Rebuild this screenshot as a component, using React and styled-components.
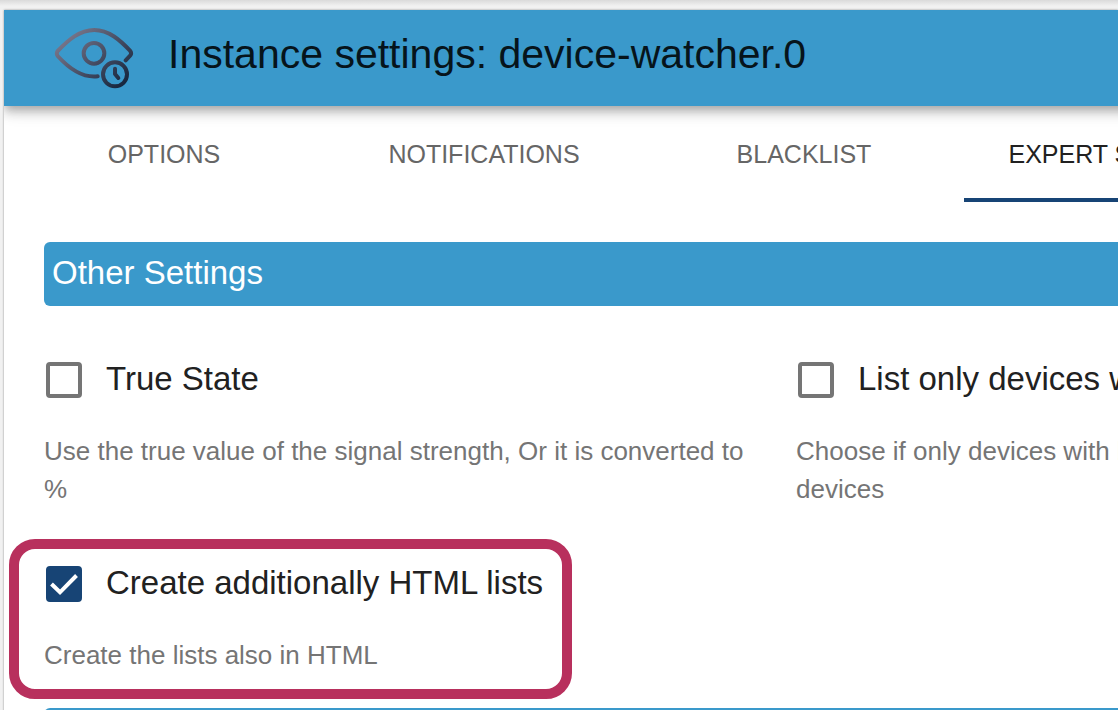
import React, { useState } from "react";
import styled, { createGlobalStyle } from "styled-components";

const GlobalStyle = createGlobalStyle`
  *, *::before, *::after { box-sizing: border-box; }
  body {
    margin: 0;
    overflow: hidden;
    background: #f1f1f1;
    color: #212121;
    font-family: "Liberation Sans", Arial, sans-serif;
  }
  h1, h2, p { margin: 0; font-weight: 400; }
`;

const Page = styled.div`
  display: flex;
  min-height: 100vh;
  padding: 10px 0 0 4px;
  background: linear-gradient(#dadada, #f1f1f1 6px);
`;

const Dialog = styled.main`
  flex: 1;
  min-width: 0;
  background: #fff;
  box-shadow: 0 0 2px rgba(0, 0, 0, 0.4);
`;

const AppBar = styled.header`
  display: flex;
  align-items: center;
  gap: 34px;
  height: 96px;
  padding: 0 48px;
  margin-right: -24px;
  background: #3a99cb;
  box-shadow: 0 4px 8px -2px rgba(0, 0, 0, 0.2), 0 8px 10px rgba(0, 0, 0, 0.14),
    0 2px 20px rgba(0, 0, 0, 0.12);
  clip-path: inset(0 0 -40px 0);
`;

const Title = styled.h1`
  padding-bottom: 8px;
  color: #06141b;
  font-size: 41px;
  line-height: 48px;
  white-space: nowrap;
`;

const Tabs = styled.nav`
  display: flex;
`;

const Tab = styled.button`
  flex: 0 0 320px;
  height: 96px;
  padding: 4px 0 0;
  border: 0;
  border-bottom: 4px solid ${(p) => (p.$active ? "#174475" : "transparent")};
  background: transparent;
  color: ${(p) => (p.$active ? "#212121" : "#666")};
  font: 400 25px/32px "Liberation Sans", Arial, sans-serif;
  text-transform: uppercase;
  white-space: nowrap;
`;

const Panel = styled.section`
  padding: 40px 0 0 40px;
`;

const SectionTitle = styled.h2`
  height: 64px;
  padding: 0 8px;
  border-radius: 6px 0 0 6px;
  background: #3a99cb;
  color: #fff;
  font-size: 33px;
  line-height: 62px;
`;

const Fields = styled.div`
  display: grid;
  grid-template-columns: repeat(2, 752px);
  row-gap: 36px;
  padding: 36px 0 32px;
`;

const Field = styled.div`
  position: relative;
  justify-self: start;
  padding-right: ${(p) => (p.$highlight ? "0" : "40px")};

  &::after {
    content: ${(p) => (p.$highlight ? '""' : "none")};
    position: absolute;
    inset: -7px -29px -23px -35px;
    border: 10px solid #b8305d;
    border-radius: 26px;
    pointer-events: none;
  }
`;

const CheckLabel = styled.label`
  display: flex;
  align-items: center;
  gap: 24px;
  height: 76px;
  padding-left: 2px;
  font-size: 33px;
  line-height: 40px;
  white-space: nowrap;
`;

const LabelText = styled.span`
  padding-bottom: 2px;
`;

const CheckBox = styled.span`
  display: grid;
  flex: none;
  width: 36px;
  height: 36px;

  > * {
    grid-area: 1 / 1;
  }
`;

const CheckInput = styled.input`
  appearance: none;
  width: 36px;
  height: 36px;
  margin: 0;
  border: 4px solid #757575;
  border-radius: 4px;

  &:checked {
    border-color: #174475;
    background: #174475;
  }
`;

const CheckMark = styled.svg`
  width: 36px;
  height: 36px;
  pointer-events: none;
`;

const Help = styled.p`
  margin: 14px 0 2px;
  color: #757575;
  font-size: 26px;
  line-height: 38px;
`;

function WatcherIcon() {
  return (
    <svg width="82" height="64" viewBox="156 78 246 192" fill="none" aria-hidden="true">
      <defs>
        <linearGradient id="watcher" gradientUnits="userSpaceOnUse" x1="200" y1="80" x2="365" y2="260">
          <stop offset="0" stopColor="#817d91" />
          <stop offset="1" stopColor="#16273f" />
        </linearGradient>
      </defs>
      <g stroke="url(#watcher)" strokeWidth="12" strokeLinecap="round" strokeLinejoin="round">
        <path d="M293 229C242 235 202 200 173 168Q168 160 173 153C205 120 238 90 283 90C327 90 361 121 390 152Q396 159 391 166L377 181" />
        <circle cx="282" cy="160" r="31" />
        <circle cx="345" cy="223" r="36" />
        <path d="M345 206V222L355 234" />
      </g>
    </svg>
  );
}

function CheckField({ label, help, initial = false, highlight = false }) {
  const [checked, setChecked] = useState(initial);
  return (
    <Field $highlight={highlight}>
      <CheckLabel>
        <CheckBox>
          <CheckInput type="checkbox" checked={checked} onChange={(e) => setChecked(e.target.checked)} />
          {checked && (
            <CheckMark viewBox="0 0 36 36" aria-hidden="true">
              <path d="M5.500 18L14 26.300L30.500 9.500" fill="none" stroke="#fff" strokeWidth="4" />
            </CheckMark>
          )}
        </CheckBox>
        <LabelText>{label}</LabelText>
      </CheckLabel>
      <Help>{help}</Help>
    </Field>
  );
}

const tabs = ["Options", "Notifications", "Blacklist", "Expert Settings"];

export default function App() {
  const [active, setActive] = useState("Expert Settings");
  return (
    <>
      <GlobalStyle />
      <Page>
        <Dialog>
          <AppBar>
            <WatcherIcon />
            <Title>Instance settings: device-watcher.0</Title>
          </AppBar>
          <Tabs>
            {tabs.map((name) => (
              <Tab key={name} type="button" $active={name === active} onClick={() => setActive(name)}>
                {name}
              </Tab>
            ))}
          </Tabs>
          <Panel>
            <SectionTitle>Other Settings</SectionTitle>
            <Fields>
              <CheckField
                label="True State"
                help="Use the true value of the signal strength, Or it is converted to %"
              />
              <CheckField
                label="List only devices with battery"
                help="Choose if only devices with battery should be listed or all devices"
              />
              <CheckField
                label="Create additionally HTML lists"
                help="Create the lists also in HTML"
                initial
                highlight
              />
            </Fields>
            <SectionTitle as="div" />
          </Panel>
        </Dialog>
      </Page>
    </>
  );
}
